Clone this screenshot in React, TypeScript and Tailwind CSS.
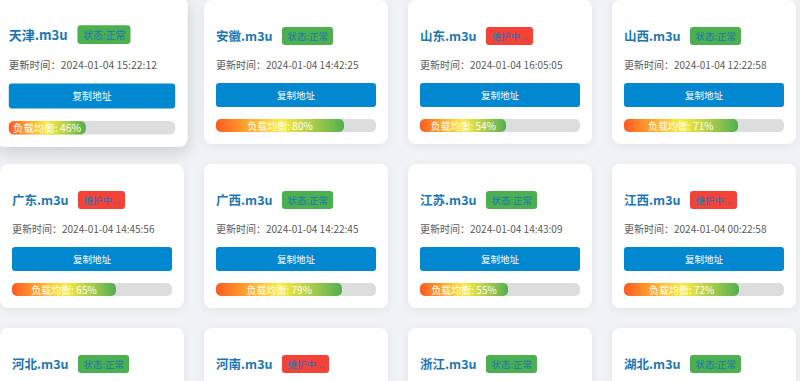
import React from 'react'

type Source = {
  name: string
  ok: boolean
  time: string
  load: number
  hover?: boolean
}

const sources: Source[] = [
  { name: '天津', ok: true, time: '2024-01-04 15:22:12', load: 46, hover: true },
  { name: '安徽', ok: true, time: '2024-01-04 14:42:25', load: 80 },
  { name: '山东', ok: false, time: '2024-01-04 16:05:05', load: 54 },
  { name: '山西', ok: true, time: '2024-01-04 12:22:58', load: 71 },
  { name: '广东', ok: false, time: '2024-01-04 14:45:56', load: 65 },
  { name: '广西', ok: true, time: '2024-01-04 14:22:45', load: 79 },
  { name: '江苏', ok: true, time: '2024-01-04 14:43:09', load: 55 },
  { name: '江西', ok: false, time: '2024-01-04 00:22:58', load: 72 },
  { name: '河北', ok: true, time: '2024-01-04 13:52:31', load: 62 },
  { name: '河南', ok: false, time: '2024-01-04 11:08:44', load: 58 },
  { name: '浙江', ok: true, time: '2024-01-04 15:01:17', load: 67 },
  { name: '湖北', ok: true, time: '2024-01-04 14:36:02', load: 74 },
]

const Card = ({ item }: { item: Source }) => {
  return (
    <div
      className={`rounded-lg bg-white px-3 pt-[26px] pb-3 ${
        item.hover
          ? 'scale-[1.04] shadow-[0_4px_16px_rgba(0,0,0,0.16)]'
          : 'shadow-[0_2px_10px_rgba(0,0,0,0.06)]'
      }`}
    >
      <div className="flex h-[19px] items-center gap-2.5">
        <h3 className="text-[12.5px] font-bold leading-[19px] text-[#1b76b6]">{item.name}.m3u</h3>
        <span
          className={`h-[18px] rounded-[3px] px-[5px] text-[9.5px] leading-[18px] whitespace-nowrap text-[#1b76b6] ${
            item.ok ? 'bg-[#4caf50]' : 'bg-[#f44336]'
          }`}
        >
          {item.ok ? '状态:正常' : '维护中...'}
        </span>
      </div>
      <p className="mt-3 text-[10px] leading-[16px] text-[#5a5a5a]">更新时间：{item.time}</p>
      <button className="mt-2.5 block h-6 w-full rounded-[3px] bg-[#0288d1] text-[9.5px] text-white">
        复制地址
      </button>
      <div className="mt-3 h-[13px] w-full rounded-[5px] bg-[#dddddd]">
        <div
          className="flex h-full items-center justify-center rounded-[5px] bg-gradient-to-r from-[#ff5722] via-[#ffeb3b] to-[#4caf50] text-[10px] leading-none whitespace-nowrap text-white"
          style={{ width: `${item.load}%` }}
        >
          负载均衡: {item.load}%
        </div>
      </div>
    </div>
  )
}

const App = () => {
  return (
    <div className="min-h-screen bg-[#f0f2f5]">
      <div className="grid w-[796px] grid-cols-4 gap-5 font-['Noto_Sans_CJK_SC','Liberation_Sans',sans-serif]">
        {sources.map((item) => (
          <Card key={item.name} item={item} />
        ))}
      </div>
    </div>
  )
}

export default App
